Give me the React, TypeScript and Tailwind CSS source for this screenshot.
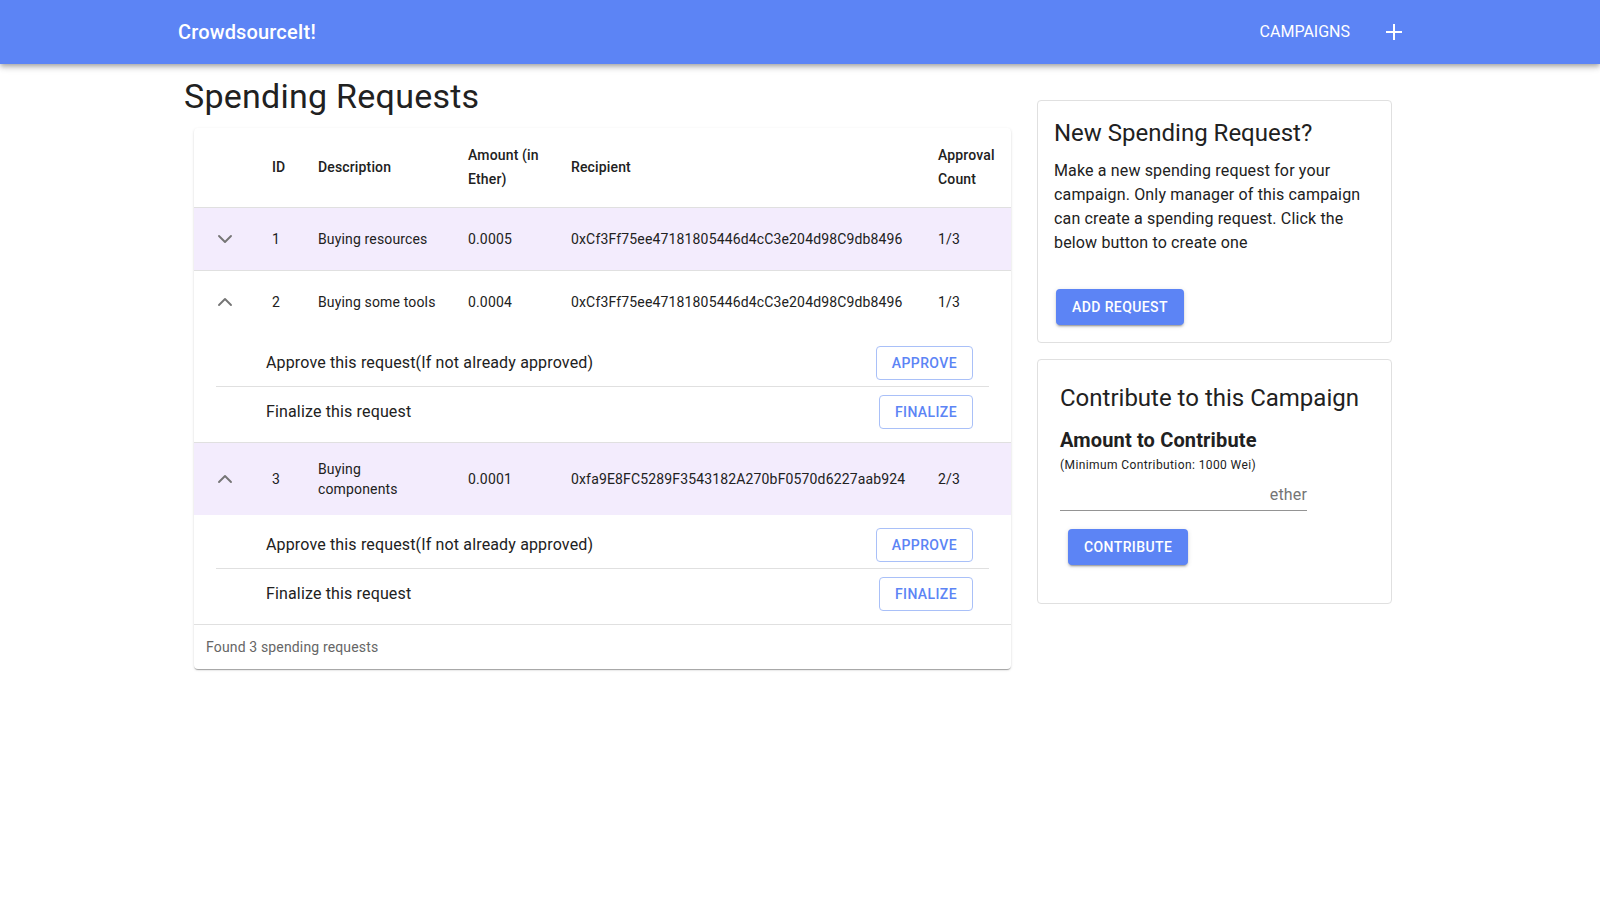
import React, { useState } from 'react';
import { ChevronDown, ChevronUp } from 'lucide-react';

type SpendingRequest = {
  id: number;
  description: string;
  amount: string;
  recipient: string;
  approvals: string;
};

const REQUESTS: SpendingRequest[] = [
  {
    id: 1,
    description: 'Buying resources',
    amount: '0.0005',
    recipient: '0xCf3Ff75ee47181805446d4cC3e204d98C9db8496',
    approvals: '1/3',
  },
  {
    id: 2,
    description: 'Buying some tools',
    amount: '0.0004',
    recipient: '0xCf3Ff75ee47181805446d4cC3e204d98C9db8496',
    approvals: '1/3',
  },
  {
    id: 3,
    description: 'Buying components',
    amount: '0.0001',
    recipient: '0xfa9E8FC5289F3543182A270bF0570d6227aab924',
    approvals: '2/3',
  },
];

const OutlinedButton: React.FC<{ label: string }> = ({ label }) => (
  <button className="h-[34px] px-[15px] rounded border border-[#a9c0f8] text-[#5c84f5] text-sm font-medium tracking-[0.4px] uppercase hover:bg-[#5c84f5]/5">
    {label}
  </button>
);

const RequestRow: React.FC<{
  request: SpendingRequest;
  open: boolean;
  onToggle: () => void;
}> = ({ request, open, onToggle }) => {
  const rowBg = request.id % 2 === 1 ? 'bg-[#f3ecfd]' : 'bg-white';
  const rowBorder = open ? '' : 'border-b border-[#e0e0e0]';

  return (
    <>
      <tr className={`${rowBg} ${rowBorder} text-sm tracking-[0.15px] text-[#212121]`}>
        <td className="pl-[19px] py-0 h-[63px]">
          <button onClick={onToggle} className="block text-[#757575]" aria-label="expand row">
            {open ? <ChevronUp size={24} strokeWidth={1.9} /> : <ChevronDown size={24} strokeWidth={1.9} />}
          </button>
        </td>
        <td className="px-4 py-4">{request.id}</td>
        <td className="pl-4 pr-[15px] py-4 leading-5">{request.description}</td>
        <td className="pl-4 pr-3 py-4">{request.amount}</td>
        <td className="px-4 py-4 whitespace-nowrap">{request.recipient}</td>
        <td className="pl-4 pr-3 py-4">{request.approvals}</td>
      </tr>
      {open && (
        <tr className="border-b border-[#e0e0e0]">
          <td colSpan={6} className="p-0">
            <div className="mx-[22px] py-[6px] tracking-[0.15px]">
              <div className="h-[48px] flex items-center justify-between pl-[50px] pr-4 border-b border-[#e0e0e0]">
                <span className="text-base text-[#212121]">Approve this request(If not already approved)</span>
                <OutlinedButton label="Approve" />
              </div>
              <div className="h-[49px] flex items-center justify-between pl-[50px] pr-4">
                <span className="text-base text-[#212121]">Finalize this request</span>
                <OutlinedButton label="Finalize" />
              </div>
            </div>
          </td>
        </tr>
      )}
    </>
  );
};

export default function App() {
  const [openRows, setOpenRows] = useState<number[]>([2, 3]);
  const [amount, setAmount] = useState('');

  const toggleRow = (id: number) => {
    setOpenRows((rows) => (rows.includes(id) ? rows.filter((r) => r !== id) : [...rows, id]));
  };

  return (
    <div className="min-h-screen bg-white font-['Roboto',sans-serif] text-[#212121]">
      {/* App bar */}
      <header className="h-16 bg-[#5c84f5] flex items-center pl-[178px] pr-[198px] shadow-[0_2px_4px_-1px_rgba(0,0,0,0.2),0_4px_5px_0_rgba(0,0,0,0.14),0_1px_10px_0_rgba(0,0,0,0.12)] relative z-10">
        <span className="text-white text-xl font-medium tracking-[0.15px]">CrowdsourceIt!</span>
        <nav className="ml-auto flex items-center gap-9">
          <a className="text-white text-base uppercase">Campaigns</a>
          <svg width="16" height="16" viewBox="0 0 16 16" className="text-white">
            <path d="M8 0v16M0 8h16" stroke="currentColor" strokeWidth="2" />
          </svg>
        </nav>
      </header>

      {/* Content */}
      <div className="flex pl-[184px] gap-[26px]">
        {/* Left column */}
        <div className="w-[827px] pt-[11px]">
          <h1 className="text-[34px] leading-[42px] font-normal tracking-[0.25px] text-[#212121]">Spending Requests</h1>

          <div className="mt-[11px] ml-[10px] bg-white rounded shadow-[0_2px_1px_-1px_rgba(0,0,0,0.2),0_1px_1px_0_rgba(0,0,0,0.14),0_1px_3px_0_rgba(0,0,0,0.12)] overflow-hidden">
            <table className="w-full table-fixed border-collapse text-left">
              <colgroup>
                <col className="w-[62px]" />
                <col className="w-[46px]" />
                <col className="w-[150px]" />
                <col className="w-[103px]" />
                <col className="w-[367px]" />
                <col className="w-[89px]" />
              </colgroup>
              <thead>
                <tr className="border-b border-[#e0e0e0] text-sm font-medium leading-6 tracking-[0.15px] text-[#212121] h-[79px]">
                  <th className="font-medium" />
                  <th className="px-4 font-medium">ID</th>
                  <th className="px-4 font-medium">Description</th>
                  <th className="pl-4 pr-3 font-medium">Amount (in Ether)</th>
                  <th className="px-4 font-medium">Recipient</th>
                  <th className="pl-4 pr-3 font-medium">Approval Count</th>
                </tr>
              </thead>
              <tbody>
                {REQUESTS.map((request) => (
                  <RequestRow
                    key={request.id}
                    request={request}
                    open={openRows.includes(request.id)}
                    onToggle={() => toggleRow(request.id)}
                  />
                ))}
              </tbody>
            </table>
            <div className="h-[44px] flex items-center px-3 text-sm tracking-[0.15px] text-[#666666]">
              Found {REQUESTS.length} spending requests
            </div>
          </div>
        </div>

        {/* Right column */}
        <div className="w-[355px] pt-9 flex flex-col gap-4">
          <div className="border border-[#e0e0e0] rounded px-4 pt-4 pb-[17px]">
            <h2 className="text-2xl leading-8 text-[#212121]">New Spending Request?</h2>
            <p className="mt-[10px] text-base leading-6 tracking-[0.15px] text-[#212121]">
              Make a new spending request for your campaign. Only manager of this campaign can create a spending
              request. Click the below button to create one
            </p>
            <button className="mt-[34px] ml-[2px] h-9 px-4 rounded bg-[#5c84f5] text-white text-sm font-medium tracking-[0.4px] uppercase shadow-[0_3px_1px_-2px_rgba(0,0,0,0.2),0_2px_2px_0_rgba(0,0,0,0.14),0_1px_5px_0_rgba(0,0,0,0.12)]">
              Add Request
            </button>
          </div>

          <div className="border border-[#e0e0e0] rounded px-[22px] pt-[22px] pb-[38px]">
            <h2 className="text-2xl leading-8 text-[#212121]">Contribute to this Campaign</h2>
            <h3 className="mt-3 text-xl leading-7 font-bold tracking-[0.15px] text-[#212121]">Amount to Contribute</h3>
            <p className="mt-[3px] text-xs leading-4 tracking-[0.4px] text-[#212121]">
              (Minimum Contribution: 1000 Wei)
            </p>
            <div className="mt-[6px] w-[247px] h-8 flex items-center border-b border-[#949494]">
              <input
                value={amount}
                onChange={(e) => setAmount(e.target.value)}
                className="flex-1 min-w-0 bg-transparent outline-none text-base"
              />
              <span className="text-base tracking-[0.15px] text-[#757575]">ether</span>
            </div>
            <button className="mt-[18px] ml-2 h-9 px-4 rounded bg-[#5c84f5] text-white text-sm font-medium tracking-[0.4px] uppercase shadow-[0_3px_1px_-2px_rgba(0,0,0,0.2),0_2px_2px_0_rgba(0,0,0,0.14),0_1px_5px_0_rgba(0,0,0,0.12)]">
              Contribute
            </button>
          </div>
        </div>
      </div>
    </div>
  );
}
